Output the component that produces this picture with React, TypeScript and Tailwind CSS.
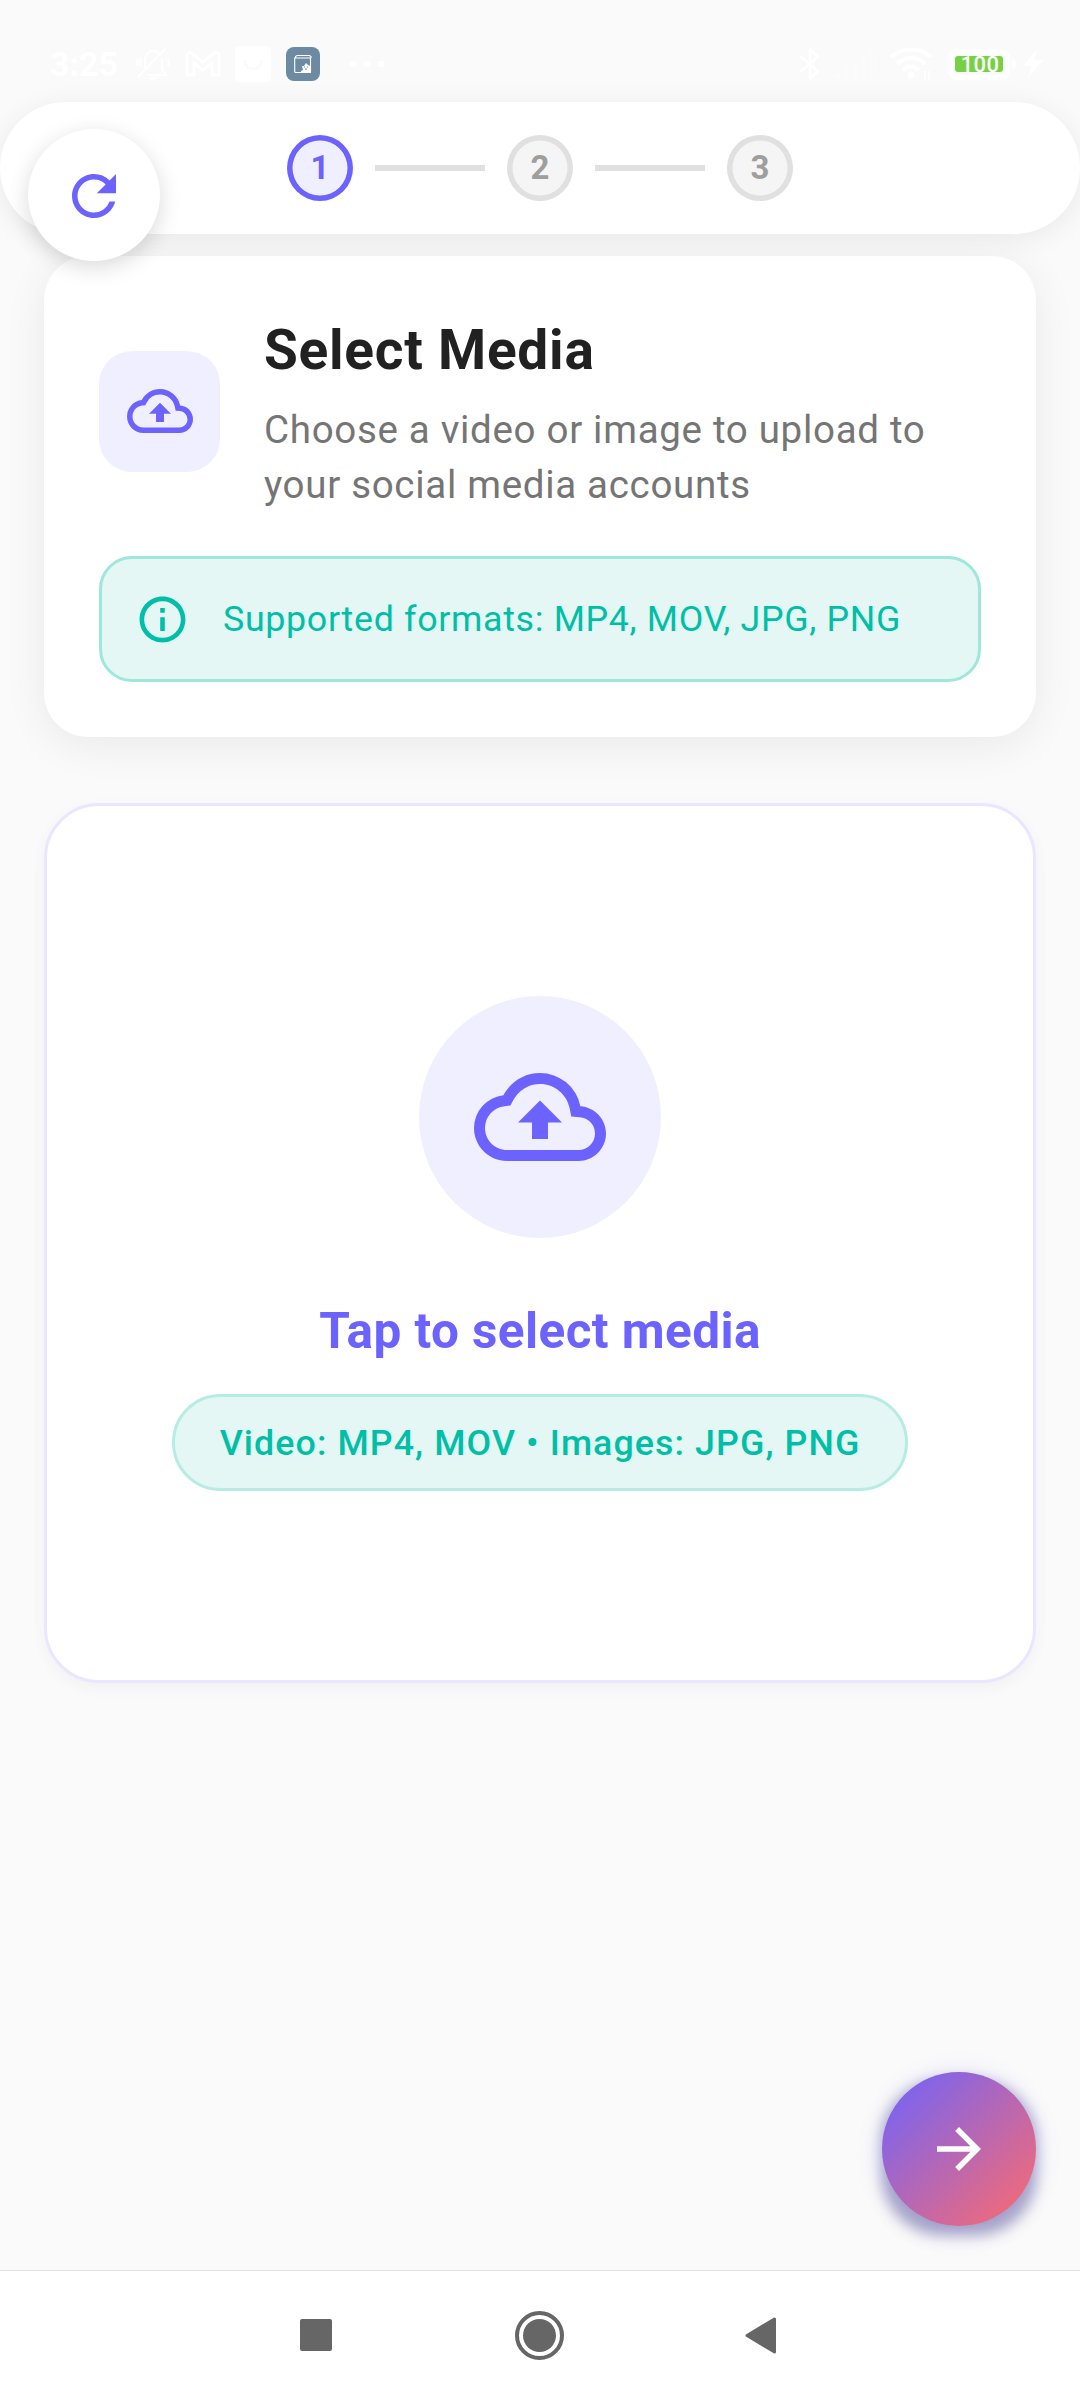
import { Fragment } from "react";
import {
  MdArrowForward,
  MdInfoOutline,
  MdOutlineCloudUpload,
  MdRefresh,
} from "react-icons/md";

function StatusBar() {
  return (
    <div className="flex h-[102px] shrink-0 items-start justify-between pt-[46px]">
      <div className="flex h-[36px] items-center pl-[50px] text-white">
        <span className="w-[86px] text-[34px] font-bold leading-[36px]">3:25</span>
        <svg className="h-[36px] w-[34px]" viewBox="0 0 34 36" fill="none" stroke="currentColor" strokeWidth="2.2">
          <path d="M9 22V14c0-5 3-9 8-9 3 0 5 1 6 3M26 13v10l4 6H12M2 31 29 3M1.5 13v7M4.5 11v10M32.500 13v7" />
          <path d="M12 31h10c-2 4-8 4-10 0z" fill="currentColor" stroke="none" />
        </svg>
        <svg className="ml-[15px] h-[28px] w-[36px]" viewBox="0 0 36 28" fill="none" stroke="currentColor" strokeWidth="3">
          <path d="M2 4v21h7V13l9 7 9-7v12h7V4l-3-2-13 10L5 2z" strokeLinejoin="round" />
        </svg>
        <svg className="ml-[14px] h-[36px] w-[36px]" viewBox="0 0 36 36">
          <rect width="36" height="36" rx="5" fill="currentColor" />
          <path d="M9 14c1 12 17 12 18 0" fill="none" stroke="#fafafa" strokeWidth="2.5" />
        </svg>
        <svg className="ml-[15px] h-[34px] w-[34px]" viewBox="0 0 34 34">
          <rect width="34" height="34" rx="8" fill="#6c8ba2" />
          <path d="M9.5 11V9.5L11 8.500h12.500L25 9.500V11M8.700 11h15.800v14.500H9.500L8.700 25z" fill="none" stroke="#fff" strokeWidth="1.1" />
          <path d="M15 26v-2l2-1-1-4 2 0 2-3 2 2 2 1v7z" fill="#fff" />
          <path d="M18 20h1M21 20h1M19 22h2" stroke="#6c8ba2" strokeWidth="1" />
        </svg>
        <svg className="ml-[29px] h-[8px] w-[36px]" viewBox="0 0 36 8" fill="currentColor">
          <circle cx="4" cy="4" r="3.3" />
          <circle cx="18" cy="4" r="3.3" />
          <circle cx="32" cy="4" r="3.3" />
        </svg>
      </div>
      <div className="flex h-[36px] items-center pr-[37px] text-white">
        <svg className="h-[36px] w-[22px]" viewBox="0 0 22 36" fill="none" stroke="currentColor" strokeWidth="2.500">
          <path d="m1 10 18 15-8 8V3l8 8L1 26" />
        </svg>
        <svg className="ml-[14px] h-[28px] w-[38px]" viewBox="0 0 38 28" fill="#fbfbfb">
          <path d="M0 23h5v5H0zM9 18h5v10H9zM18 12h5v16h-5zM27 6h4v22h-4zM34 0h4v28h-4z" />
        </svg>
        <svg className="ml-[17px] h-[34px] w-[42px]" viewBox="0 0 42 34" fill="none" stroke="currentColor" strokeWidth="4">
          <path d="M1 10c11-10 29-10 40 0M7 17c8-8 20-8 28 0M13 23c5-4 11-4 16 0" />
          <circle cx="21" cy="28" r="3.5" fill="currentColor" stroke="none" />
          <path d="M35 24v9M39 24v9" strokeWidth="2" />
        </svg>
        <div className="ml-[16px] flex h-[31px] w-[62px] items-center justify-center rounded-[9px] border-[5px] border-white">
          <div className="flex h-[16px] w-[48px] shrink-0 items-center justify-center rounded-[3px] bg-[#76d145]">
            <span className="pl-[2px] pt-[2px] text-[22px] font-medium leading-[26px] tracking-[0.3px]">100</span>
          </div>
        </div>
        <span className="ml-[2px] h-[10px] w-[4px] rounded-r-[4px] bg-white" />
        <svg className="ml-[7px] h-[30px] w-[20px]" viewBox="0 0 20 30" fill="currentColor">
          <path d="M14 0 0 17h8L5 29l15-18h-9z" />
        </svg>
      </div>
    </div>
  );
}

function Stepper() {
  return (
    <div className="relative z-10 flex h-[132px] shrink-0 items-center justify-center rounded-[66px] bg-white shadow-[0_5px_28px_rgba(0,0,0,0.07)]">
      <div className="flex items-center gap-[22px]">
        {[1, 2, 3].map((step) => (
          <Fragment key={step}>
            {step > 1 && <span className="h-[6px] w-[110px] bg-[#e0e0e0]" />}
            <span
              className={
                step === 1
                  ? "flex size-[66px] items-center justify-center rounded-full bg-[#f0efff] text-[33px] font-bold text-[#6c63ff] shadow-[inset_0_0_0_5.5px_#6c63ff]"
                  : "flex size-[66px] items-center justify-center rounded-full bg-[#f5f5f5] text-[33px] font-bold text-[#9e9e9e] shadow-[inset_0_0_0_5.5px_#e0e0e0]"
              }
            >
              {step}
            </span>
          </Fragment>
        ))}
      </div>
      <button className="absolute left-[27.5px] top-[27px] flex size-[132px] items-center justify-center rounded-full bg-white pt-[1px] text-[#6c63ff] shadow-[0_6px_22px_rgba(0,0,0,0.15)]">
        <MdRefresh size={66} />
      </button>
    </div>
  );
}

function SelectMediaCard() {
  return (
    <section className="mx-[44px] mt-[22px] h-[481px] shrink-0 rounded-[44px] bg-white px-[55px] pt-[55px] shadow-[0_8px_44px_rgba(0,0,0,0.07)]">
      <div className="flex items-center gap-[44px]">
        <span className="flex size-[121px] shrink-0 items-start justify-center rounded-[33px] bg-[#f0efff] pt-[27px] text-[#6c63ff]">
          <MdOutlineCloudUpload size={66} />
        </span>
        <div className="h-[201px] flex-1">
          <h1 className="pt-[6px] text-[55px] font-bold leading-[66px] tracking-[0.75px] text-[#212121]">Select Media</h1>
          <p className="mt-[19px] text-[38.5px] leading-[55px] tracking-[0.69px] text-[#757575]">
            Choose a video or image to upload to
            <br />
            your social media accounts
          </p>
        </div>
      </div>
      <div className="mt-[44px] flex h-[126px] items-center gap-[33px] rounded-[33px] border-[3px] border-[#9ee7dc] bg-[#e4f7f5] px-[33px] text-[#00bfa6]">
        <MdInfoOutline size={55} />
        <span className="pt-[1px] text-[35.75px] tracking-[0.69px]">Supported formats: MP4, MOV, JPG, PNG</span>
      </div>
    </section>
  );
}

function UploadArea() {
  return (
    <section className="mx-[44px] mt-[66px] flex h-[880px] shrink-0 flex-col items-center rounded-[55px] border-[3px] border-[#e9e7ff] bg-white pt-[190px] shadow-[0_5px_16px_rgba(0,0,0,0.04)]">
      <span className="flex size-[242px] items-center justify-center rounded-full bg-[#f0efff] text-[#6c63ff]">
        <MdOutlineCloudUpload size={132} />
      </span>
      <h2 className="mt-[63px] text-[49.5px] font-bold leading-[60px] tracking-[0.41px] text-[#6c63ff]">
        Tap to select media
      </h2>
      <span className="mt-[33px] flex h-[97px] w-[736px] items-center justify-center rounded-full border-[3px] border-[#b5ece4] bg-[#e4f7f5] pt-[2px] text-[35.75px] font-medium tracking-[1.1px] text-[#00bfa6]">
        Video: MP4, MOV • Images: JPG, PNG
      </span>
    </section>
  );
}

function NavigationBar() {
  return (
    <nav className="flex h-[130px] shrink-0 items-center border-t border-[#e0e0e0] bg-white pb-[1px] pl-[300px] text-[#666666]">
      <span className="size-[32px] rounded-[2px] bg-current" />
      <svg className="ml-[183px] size-[50px]" viewBox="0 0 50 50">
        <circle cx="24.5" cy="25.5" r="22.5" fill="none" stroke="currentColor" strokeWidth="4" />
        <circle cx="24.5" cy="25.5" r="16.5" fill="currentColor" />
      </svg>
      <svg className="ml-[180px] h-[38px] w-[32px]" viewBox="0 0 32 38">
        <path d="M2 19.500 29.500 3v33z" fill="currentColor" stroke="currentColor" strokeWidth="3" strokeLinejoin="round" />
      </svg>
    </nav>
  );
}

export default function App() {
  return (
    <main className="relative flex h-[2400px] w-[1080px] flex-col overflow-hidden bg-[#fafafa] font-['Roboto',sans-serif]">
      <StatusBar />
      <Stepper />
      <SelectMediaCard />
      <UploadArea />
      <div className="flex flex-1 items-end justify-end pb-[44px] pr-[44px]">
        <button className="relative flex size-[154px] text-white">
          <span className="absolute inset-0 translate-y-[9px] rounded-[60px] bg-[#3c3a70]/40 blur-[7px]" />
          <span className="relative flex size-full items-center justify-center rounded-full bg-[linear-gradient(135deg,#6c63ff,#ff6b6b)] shadow-[0_5px_24px_rgba(108,99,255,0.25)]">
            <MdArrowForward size={66} />
          </span>
        </button>
      </div>
      <NavigationBar />
    </main>
  );
}
